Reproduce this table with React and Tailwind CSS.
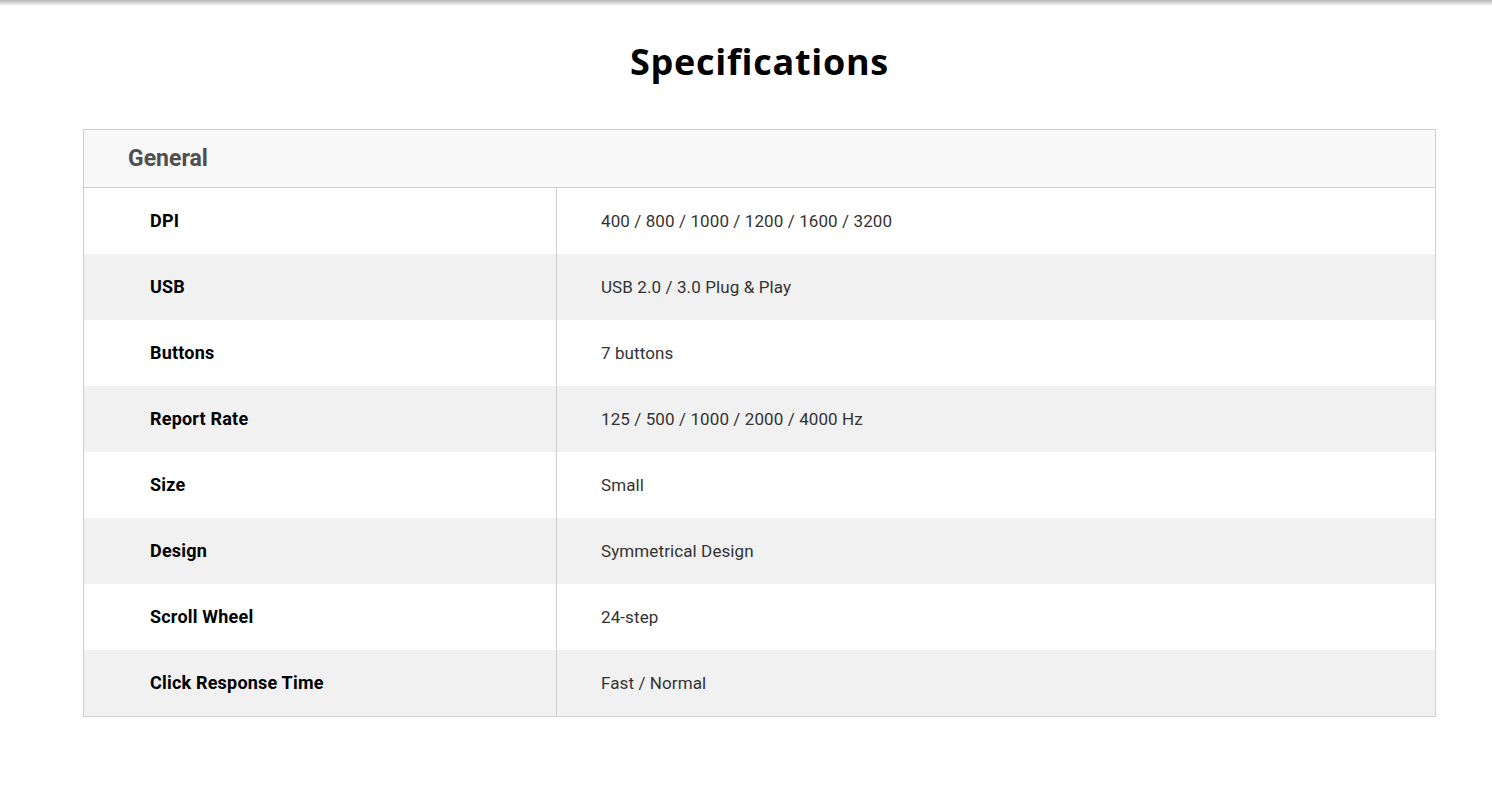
import React from "react";

const rows = [
  ["DPI", "400 / 800 / 1000 / 1200 / 1600 / 3200"],
  ["USB", "USB 2.0 / 3.0 Plug & Play"],
  ["Buttons", "7 buttons"],
  ["Report Rate", "125 / 500 / 1000 / 2000 / 4000 Hz"],
  ["Size", "Small"],
  ["Design", "Symmetrical Design"],
  ["Scroll Wheel", "24-step"],
  ["Click Response Time", "Fast / Normal"],
];

export default function App() {
  return (
    <div className="w-[1492px] h-[811px] bg-white relative" style={{ fontFamily: "Roboto, 'Liberation Sans', sans-serif" }}>
      <div className="h-[6px] bg-gradient-to-b from-[#b5b5b5] to-white" />
      <div className="ml-[83px] w-[1353px]">
        <h2
          className="text-center text-[36px] font-bold text-black pt-[32px] leading-[48px] tracking-[0.7px]"
          style={{ fontFamily: "'Open Sans', 'Liberation Sans', sans-serif" }}
        >
          Specifications
        </h2>
        <div className="mt-[43px] border border-[#cfcfcf]">
          <div className="h-[58px] bg-[#f9f9f9] border-b border-[#cfcfcf] flex items-center pl-[44px] pt-[2px] text-[23px] font-bold text-[#4f4f4f]">
            General
          </div>
          {rows.map(([k, v], i) => (
            <div key={k} className={`flex h-[66px] ${i % 2 === 1 ? "bg-[#f1f1f1]" : "bg-white"}`}>
              <div className="w-[473px] border-r border-[#cfcfcf] flex items-center pl-[66px] pb-[1px] text-[18px] font-bold tracking-[0.2px] text-black">
                {k}
              </div>
              <div className="flex-1 flex items-center pl-[44px] pt-[1px] text-[17px] tracking-[0.1px] text-[#333]">
                {v}
              </div>
            </div>
          ))}
        </div>
      </div>
    </div>
  );
}
